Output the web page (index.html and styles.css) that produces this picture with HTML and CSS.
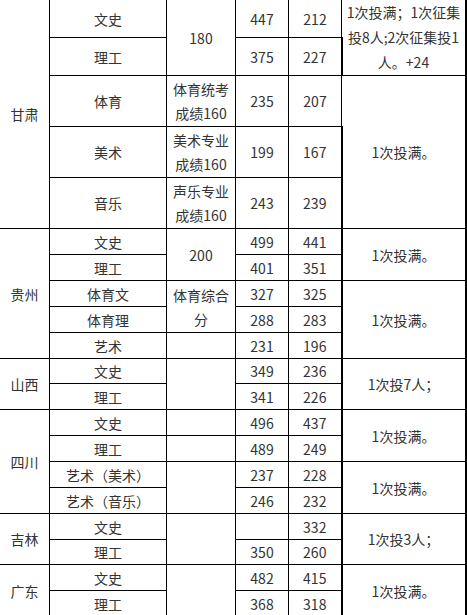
FILE: index.html
```html
<!DOCTYPE html>
<html lang="zh-CN">
<head>
<meta charset="utf-8">
<title>录取分数</title>
<link rel="stylesheet" href="styles.css">
</head>
<body>
<table class="score">
  <colgroup>
    <col class="c-prov">
    <col class="c-subj">
    <col class="c-line">
    <col class="c-num">
    <col class="c-num">
    <col class="c-note">
  </colgroup>
  <tbody>
    <tr class="h38">
      <td rowspan="5">甘肃</td>
      <td>文史</td>
      <td rowspan="2">180</td>
      <td>447</td>
      <td>212</td>
      <td rowspan="2" class="note">1次投满；1次征集<br>投8人;2次征集投1<br>人。+24</td>
    </tr>
    <tr class="h38">
      <td>理工</td>
      <td>375</td>
      <td>227</td>
    </tr>
    <tr class="h51">
      <td>体育</td>
      <td class="wrap">体育统考成绩160</td>
      <td>235</td>
      <td>207</td>
      <td rowspan="3">1次投满。</td>
    </tr>
    <tr class="h51">
      <td>美术</td>
      <td class="wrap">美术专业成绩160</td>
      <td>199</td>
      <td>167</td>
    </tr>
    <tr class="h51">
      <td>音乐</td>
      <td class="wrap">声乐专业成绩160</td>
      <td>243</td>
      <td>239</td>
    </tr>
    <tr class="h26">
      <td rowspan="5">贵州</td>
      <td>文史</td>
      <td rowspan="2">200</td>
      <td>499</td>
      <td class="thick">441</td>
      <td rowspan="2">1次投满。</td>
    </tr>
    <tr class="h26">
      <td>理工</td>
      <td>401</td>
      <td class="thick">351</td>
    </tr>
    <tr class="h26">
      <td>体育文</td>
      <td rowspan="2" class="wrap">体育综合分</td>
      <td>327</td>
      <td class="thick">325</td>
      <td rowspan="3">1次投满。</td>
    </tr>
    <tr class="h26">
      <td>体育理</td>
      <td>288</td>
      <td>283</td>
    </tr>
    <tr class="h26">
      <td>艺术</td>
      <td></td>
      <td>231</td>
      <td>196</td>
    </tr>
    <tr class="h25">
      <td rowspan="2">山西</td>
      <td>文史</td>
      <td rowspan="2"></td>
      <td>349</td>
      <td class="thick">236</td>
      <td rowspan="2">1次投7人；</td>
    </tr>
    <tr class="h26">
      <td>理工</td>
      <td>341</td>
      <td>226</td>
    </tr>
    <tr class="h26">
      <td rowspan="4">四川</td>
      <td>文史</td>
      <td></td>
      <td>496</td>
      <td class="thick">437</td>
      <td rowspan="2">1次投满。</td>
    </tr>
    <tr class="h26">
      <td>理工</td>
      <td></td>
      <td>489</td>
      <td>249</td>
    </tr>
    <tr class="h26">
      <td>艺术（美术）</td>
      <td rowspan="2"></td>
      <td>237</td>
      <td class="thick">228</td>
      <td rowspan="2">1次投满。</td>
    </tr>
    <tr class="h26">
      <td>艺术（音乐）</td>
      <td>246</td>
      <td>232</td>
    </tr>
    <tr class="h26">
      <td rowspan="2">吉林</td>
      <td>文史</td>
      <td rowspan="2"></td>
      <td></td>
      <td class="thick">332</td>
      <td rowspan="2">1次投3人；</td>
    </tr>
    <tr class="h25">
      <td>理工</td>
      <td>350</td>
      <td>260</td>
    </tr>
    <tr class="h26">
      <td rowspan="2">广东</td>
      <td>文史</td>
      <td rowspan="2"></td>
      <td>482</td>
      <td class="thick">415</td>
      <td rowspan="2">1次投满。</td>
    </tr>
    <tr class="h26">
      <td>理工</td>
      <td>368</td>
      <td>318</td>
    </tr>
  </tbody>
</table>
</body>
</html>
```

FILE: styles.css
```css
html, body {
  margin: 0;
  padding: 0;
  background: #ffffff;
}

body {
  font-family: "Noto Sans CJK SC", "Noto Sans", sans-serif;
  font-size: 14px;
  color: #333333;
  overflow: hidden;
}

.score {
  border-collapse: collapse;
  table-layout: fixed;
  margin: -1px 0 0 -1px;
  width: 467px;
}

.score td {
  border: 1px solid #000000;
  text-align: center;
  vertical-align: middle;
  padding: 0 5px;
  line-height: 24px;
}

.c-prov { width: 50px; }
.c-subj { width: 117px; }
.c-line { width: 69px; }
.c-num { width: 53px; }
.c-note { width: 124px; }

.score td.note {
  line-height: 25px;
  padding: 0 4px;
}

.score td.wrap {
  padding: 0 6px;
}

.score td.thick {
  border-right-width: 2px;
}

.score tr td:last-child {
  border-right-width: 2px;
}

.h38 { height: 38px; }
.h51 { height: 51px; }
.h26 { height: 26px; }
.h25 { height: 25px; }
```
